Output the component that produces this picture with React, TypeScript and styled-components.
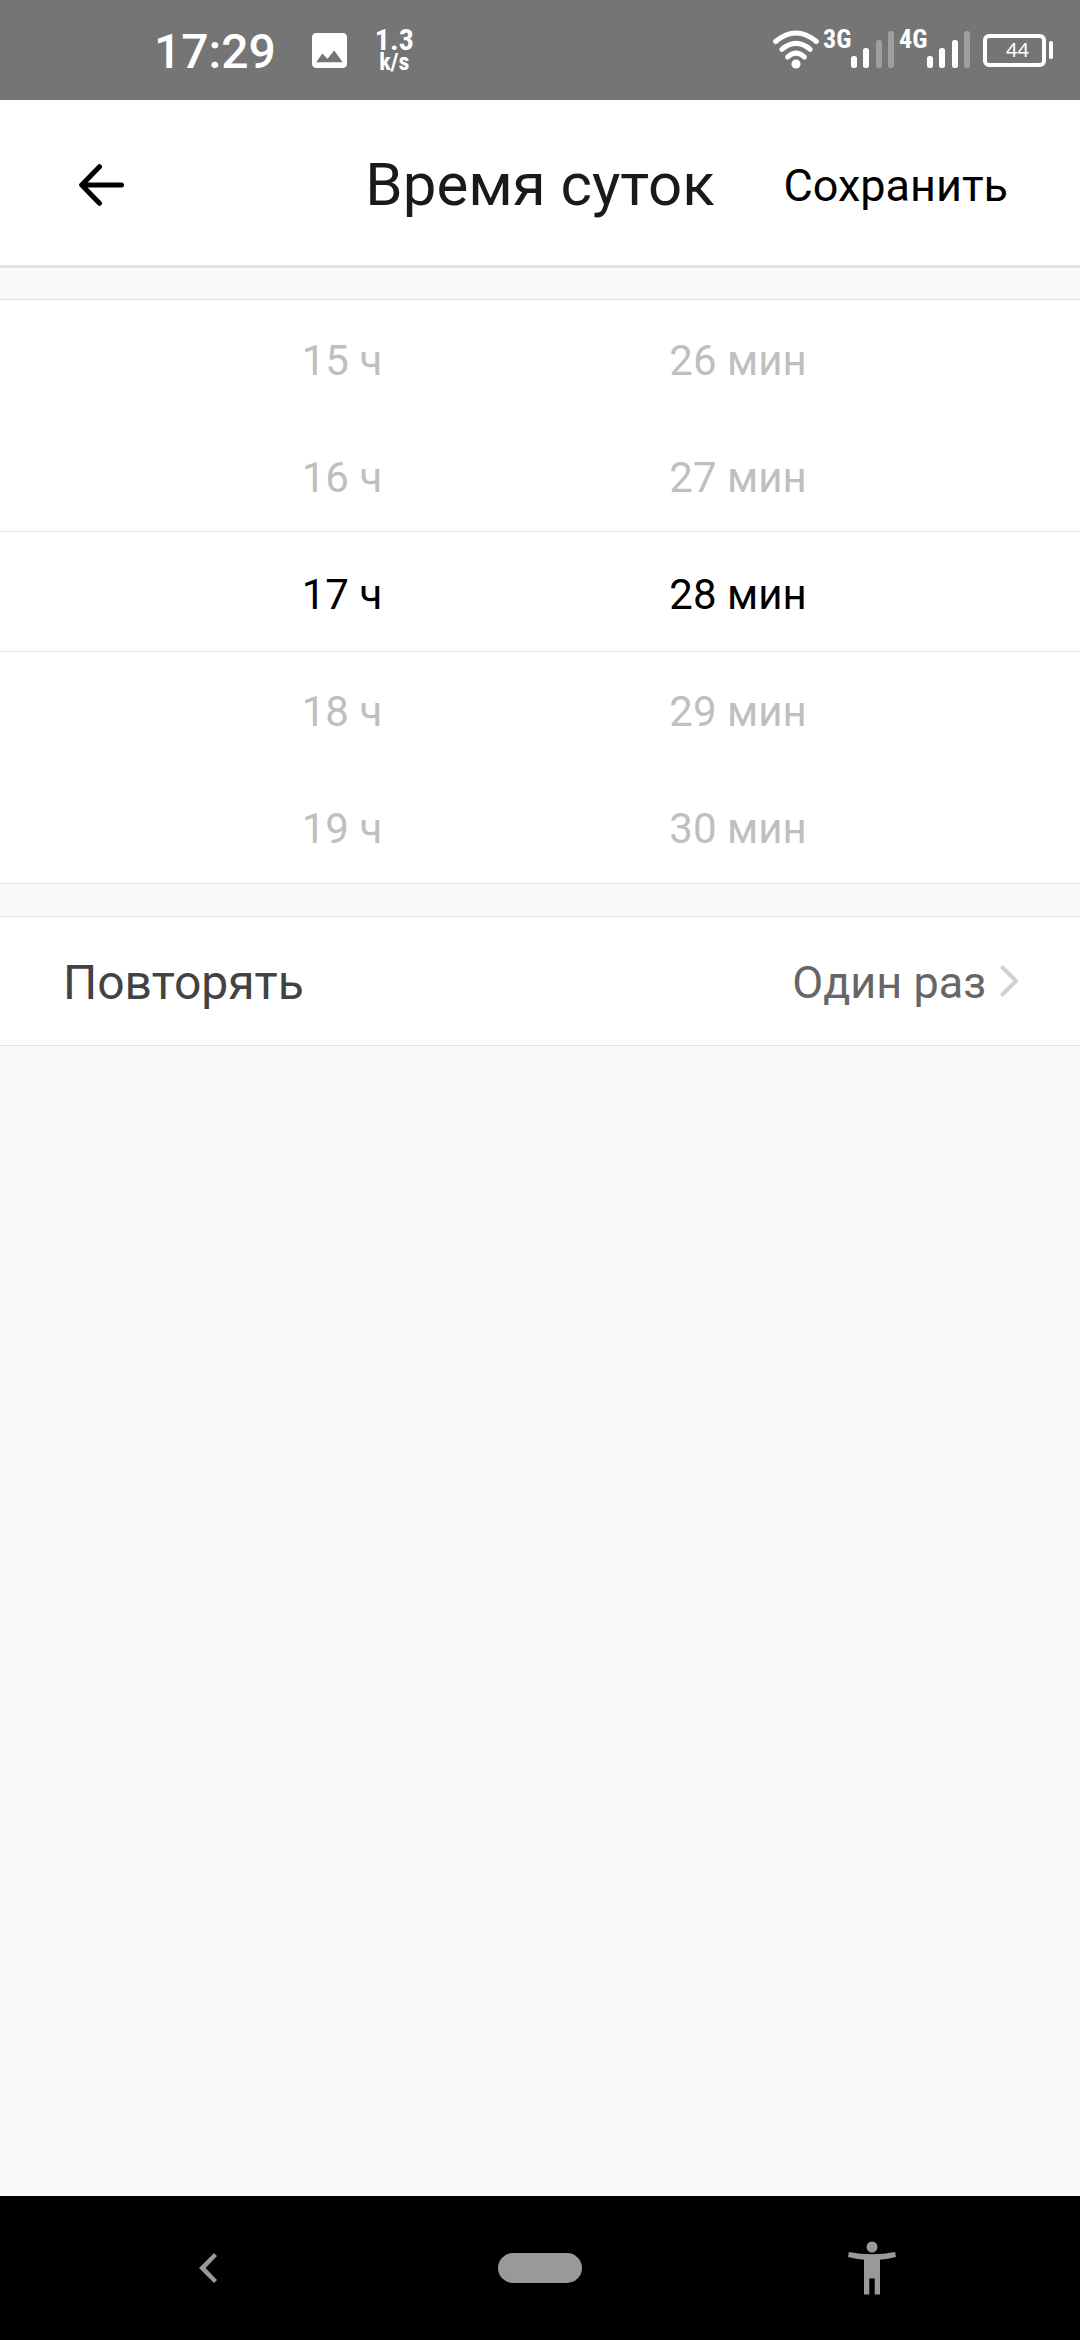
import React, { useState } from 'react';
import styled, { createGlobalStyle } from 'styled-components';

const GlobalStyle = createGlobalStyle`
  *, *::before, *::after { box-sizing: border-box; }
  body {
    margin: 0;
    background: #fafafa;
    font-family: Roboto, 'Noto Sans', sans-serif;
    font-size: 42px;
    line-height: 1;
  }
  button {
    border: 0;
    padding: 0;
    background: none;
    font: inherit;
    color: inherit;
    cursor: pointer;
  }
  svg { display: block; flex: none; }
`;

const Screen = styled.div`
  display: flex;
  flex-direction: column;
  min-height: 100vh;
`;

const StatusBar = styled.div`
  display: flex;
  align-items: center;
  justify-content: space-between;
  height: 100px;
  padding: 0 27px 0 154px;
  background: #757575;
  color: #fff;
`;

const StatusGroup = styled.div`
  display: flex;
  align-items: center;
`;

const Clock = styled.time`
  padding-top: 4px;
  font-size: 48px;
  font-weight: 500;
`;

const Speed = styled.div`
  display: flex;
  flex-direction: column;
  align-items: center;
  margin-left: 28px;
  font-family: 'Roboto Condensed', 'Liberation Sans Narrow', Roboto, sans-serif;
  font-weight: 700;
`;

const SpeedValue = styled.span`
  font-size: 30px;
  line-height: 24px;
`;

const SpeedUnit = styled.span`
  font-size: 24px;
  line-height: 20px;
`;

const PictureIcon = styled.svg`
  margin-left: 36px;
`;

const Network = styled.div`
  display: flex;
  align-items: flex-start;
  height: 40px;
  margin-left: 4px;
`;

const NetworkLabel = styled.span`
  width: 28px;
  font-family: 'Roboto Condensed', 'Liberation Sans Narrow', Roboto, sans-serif;
  font-size: 26px;
  line-height: 18px;
  font-weight: 700;
`;

const Battery = styled.div`
  display: flex;
  align-items: center;
  gap: 3px;
  margin-left: 12px;
`;

const BatteryBody = styled.span`
  display: flex;
  align-items: center;
  justify-content: center;
  width: 63px;
  height: 33px;
  padding-left: 6px;
  border: 4px solid #fff;
  border-radius: 6px;
  font-family: 'Noto Sans', sans-serif;
  font-size: 20px;
`;

const BatteryTip = styled.span`
  width: 4px;
  height: 18px;
  border-radius: 2px;
  background: #fff;
`;

const Header = styled.header`
  display: grid;
  grid-template-columns: 1fr auto 1fr;
  align-items: center;
  height: 168px;
  padding: 5px 72px 0;
  border-bottom: 3px solid #e0e0e0;
  background: #fff;
`;

const BackButton = styled.button`
  justify-self: start;
  padding: 24px 6px;
`;

const Title = styled.h1`
  margin: 0;
  color: #1a1a1a;
  font-size: 60px;
  font-weight: 400;
  white-space: nowrap;
`;

const SaveButton = styled.button`
  justify-self: end;
  color: #000;
  font-size: 45px;
`;

const Content = styled.main`
  display: flex;
  flex: 1;
  flex-direction: column;
  gap: 32px;
  padding-top: 31px;
`;

const Picker = styled.section`
  position: relative;
  display: flex;
  padding: 0 144px;
  background: #fff;
  box-shadow: inset 0 1px #e0e0e0, inset 0 -1px #e0e0e0;
`;

const PickerFrame = styled.div`
  position: absolute;
  inset: 232px 0;
  border: solid #e4e4e4;
  border-width: 1px 0;
  pointer-events: none;
`;

const Wheel = styled.div`
  display: flex;
  flex: 1;
  flex-direction: column;
`;

const WheelItem = styled.button<{ $selected: boolean }>`
  height: 117px;
  padding-top: 6px;
  color: ${(p) => (p.$selected ? '#000' : '#bfbfbf')};
`;

const RepeatRow = styled.button`
  display: flex;
  align-items: center;
  justify-content: space-between;
  height: 130px;
  padding: 0 60px 0 63px;
  border: solid #e0e0e0;
  border-width: 1px 0;
  background: #fff;
`;

const RowLabel = styled.span`
  padding-top: 3px;
  color: #424242;
  font-size: 48px;
`;

const RowValue = styled.span`
  display: flex;
  align-items: center;
  gap: 14px;
  color: #666;
  font-size: 45px;
`;

const RowValueText = styled.span`
  padding-top: 3px;
`;

const NavBar = styled.nav`
  display: flex;
  height: 144px;
  padding: 0 42px;
  background: #000;
`;

const NavButton = styled.button`
  display: flex;
  flex: 1;
  align-items: center;
  justify-content: center;
  color: #999;
`;

const HomePill = styled.span`
  width: 84px;
  height: 30px;
  border-radius: 15px;
  background: currentColor;
`;

const bars = [
  { x: 0, y: 26 },
  { x: 12, y: 18 },
  { x: 25, y: 10 },
  { x: 37, y: 1 },
];

function Signal({ label, level }: { label: string; level: number }) {
  return (
    <Network>
      <NetworkLabel>{label}</NetworkLabel>
      <svg width="44" height="40" viewBox="0 0 44 40" aria-hidden="true">
        {bars.map((bar, i) => (
          <rect
            key={bar.x}
            x={bar.x}
            y={bar.y}
            width="6"
            height={38 - bar.y}
            rx="2.5"
            fill={i < level ? '#fff' : '#9f9f9f'}
          />
        ))}
      </svg>
    </Network>
  );
}

interface TimeWheelProps {
  name: string;
  unit: string;
  count: number;
  value: number;
  onChange: (value: number) => void;
}

function TimeWheel({ name, unit, count, value, onChange }: TimeWheelProps) {
  const visible = [-2, -1, 0, 1, 2].map((step) => (value + step + count) % count);
  return (
    <Wheel role="group" aria-label={name}>
      {visible.map((item) => (
        <WheelItem
          key={item}
          type="button"
          $selected={item === value}
          aria-pressed={item === value}
          onClick={() => onChange(item)}
        >
          {String(item).padStart(2, '0')} {unit}
        </WheelItem>
      ))}
    </Wheel>
  );
}

export default function App() {
  const [hour, setHour] = useState(17);
  const [minute, setMinute] = useState(28);

  return (
    <Screen>
      <GlobalStyle />
      <StatusBar>
        <StatusGroup>
          <Clock>17:29</Clock>
          <PictureIcon width="35" height="35" viewBox="3 3 18 18" fill="#fff" aria-hidden="true">
            <path d="M21 19V5c0-1.1-.9-2-2-2H5c-1.1 0-2 .9-2 2v14c0 1.1.9 2 2 2h14c1.1 0 2-.9 2-2zM8.300 13.600l2.700 2.700L14.400 12l4.400 6H5.200z" />
          </PictureIcon>
          <Speed>
            <SpeedValue>1.3</SpeedValue>
            <SpeedUnit>k/s</SpeedUnit>
          </Speed>
        </StatusGroup>
        <StatusGroup>
          <svg width="46" height="40" viewBox="0 0 46 40" fill="none" stroke="#fff" strokeWidth="5" strokeLinecap="round" aria-hidden="true">
            <path d="M2.6 11.5Q23 -5.5 43.4 11.5" />
            <path d="M8.8 19.4Q23 7.4 37.2 19.4" />
            <path d="M14.6 27Q23 19.4 31.4 27" />
            <circle cx="23" cy="34" r="4.6" fill="#fff" stroke="none" />
          </svg>
          <Signal label="3G" level={2} />
          <Signal label="4G" level={3} />
          <Battery>
            <BatteryBody>44</BatteryBody>
            <BatteryTip />
          </Battery>
        </StatusGroup>
      </StatusBar>

      <Header>
        <BackButton type="button" aria-label="Назад">
          <svg width="48" height="42" viewBox="0 0 48 42" fill="none" stroke="#000" strokeWidth="5" strokeLinecap="round" strokeLinejoin="round" aria-hidden="true">
            <path d="M43.5 21H4M21.5 2.7L3.7 21l17.8 18.3" />
          </svg>
        </BackButton>
        <Title>Время суток</Title>
        <SaveButton type="button">Сохранить</SaveButton>
      </Header>

      <Content>
        <Picker>
          <TimeWheel name="Часы" unit="ч" count={24} value={hour} onChange={setHour} />
          <TimeWheel name="Минуты" unit="мин" count={60} value={minute} onChange={setMinute} />
          <PickerFrame />
        </Picker>

        <RepeatRow type="button">
          <RowLabel>Повторять</RowLabel>
          <RowValue>
            <RowValueText>Один раз</RowValueText>
            <svg width="20" height="32" viewBox="0 0 20 32" fill="none" stroke="#d2d2d2" strokeWidth="4" strokeLinecap="round" strokeLinejoin="round" aria-hidden="true">
              <path d="M2.5 2.5L16 16 2.5 29.5" />
            </svg>
          </RowValue>
        </RepeatRow>
      </Content>

      <NavBar>
        <NavButton type="button" aria-label="Назад">
          <svg width="18" height="30" viewBox="0 0 18 30" fill="currentColor" aria-hidden="true">
            <path d="M15 0L0 15l15 15 3-3L6.5 15 18 3z" />
          </svg>
        </NavButton>
        <NavButton type="button" aria-label="Домой">
          <HomePill />
        </NavButton>
        <NavButton type="button" aria-label="Специальные возможности">
          <svg width="48" height="54" viewBox="0 0 48 54" fill="currentColor" aria-hidden="true">
            <circle cx="24" cy="6" r="5.5" />
            <path d="M.9 11Q24 15.500 47.100 11l.9 5q-8 2-16 2.700V53.500h-5.300V37.500h-5.400v16H16V18.700Q8 18 0 16z" />
          </svg>
        </NavButton>
      </NavBar>
    </Screen>
  );
}
